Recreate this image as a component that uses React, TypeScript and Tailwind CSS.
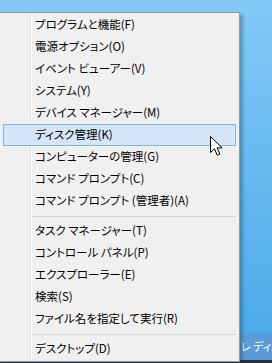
const GROUPS = [
  [
    "プログラムと機能(F)",
    "電源オプション(O)",
    "イベント ビューアー(V)",
    "システム(Y)",
    "デバイス マネージャー(M)",
    "ディスク管理(K)",
    "コンピューターの管理(G)",
    "コマンド プロンプト(C)",
    "コマンド プロンプト (管理者)(A)",
  ],
  [
    "タスク マネージャー(T)",
    "コントロール パネル(P)",
    "エクスプローラー(E)",
    "検索(S)",
    "ファイル名を指定して実行(R)",
  ],
  ["デスクトップ(D)"],
];

const ACTIVE = "ディスク管理(K)";

function Cursor() {
  return (
    <svg
      width="14"
      height="22"
      viewBox="0 0 14 22"
      className="absolute left-[210px] top-[136px]"
    >
      <path
        d="M0.5 0.5 L0.5 16.5 L4.5 12.8 L7.3 19.3 L9.8 18.2 L7.1 11.9 L12.2 11.9 Z"
        fill="#fff"
        stroke="#000"
        strokeWidth="1"
      />
    </svg>
  );
}

export default function App() {
  return (
    <div
      className="relative w-[272px] h-[363px] overflow-hidden flex flex-col bg-gradient-to-b from-[#82c9f6] to-[#46a8e7]"
      style={{ fontFamily: '"Noto Sans CJK JP", "Noto Sans", sans-serif' }}
    >
      {/* desktop behind the menu */}
      <div className="flex-1 flex flex-col justify-end">
        <div className="h-[27px] flex items-center pl-[241px] bg-[#5c9cd6] text-[11px] text-white whitespace-nowrap overflow-hidden [font-feature-settings:'palt']">
          レ ディスク
        </div>
      </div>
      <div className="h-[3px] bg-[#26323f]" />

      {/* context menu */}
      <div className="absolute left-[-1px] top-[12px] w-[241px] border border-[#979797] bg-[#f0f0f0] py-[1px] shadow-[3px_3px_3px_rgba(0,40,80,0.3)]">
        <div className="absolute left-[30px] top-0 bottom-0 w-[1px] bg-[#e0e0e0]" />
        <div className="absolute left-[31px] top-0 bottom-0 w-[1px] bg-[#fafafa]" />
        {GROUPS.map((group, gi) => (
          <div key={gi}>
            {gi > 0 && (
              <div className="h-[8px] flex items-center pl-[32px] pr-[3px]">
                <div className="w-full h-[1px] bg-[#d7d7d7]" />
              </div>
            )}
            {group.map((item) => (
              <div
                key={item}
                className={`relative h-[22px] mx-[3px] flex items-center pl-[31px] text-[11.5px] text-black [font-feature-settings:'palt'] border ${
                  item === ACTIVE
                    ? "bg-[#d5e5f7] border-[#7fb5eb]"
                    : "border-transparent"
                }`}
              >
                {item}
              </div>
            ))}
          </div>
        ))}
      </div>

      <Cursor />
    </div>
  );
}
